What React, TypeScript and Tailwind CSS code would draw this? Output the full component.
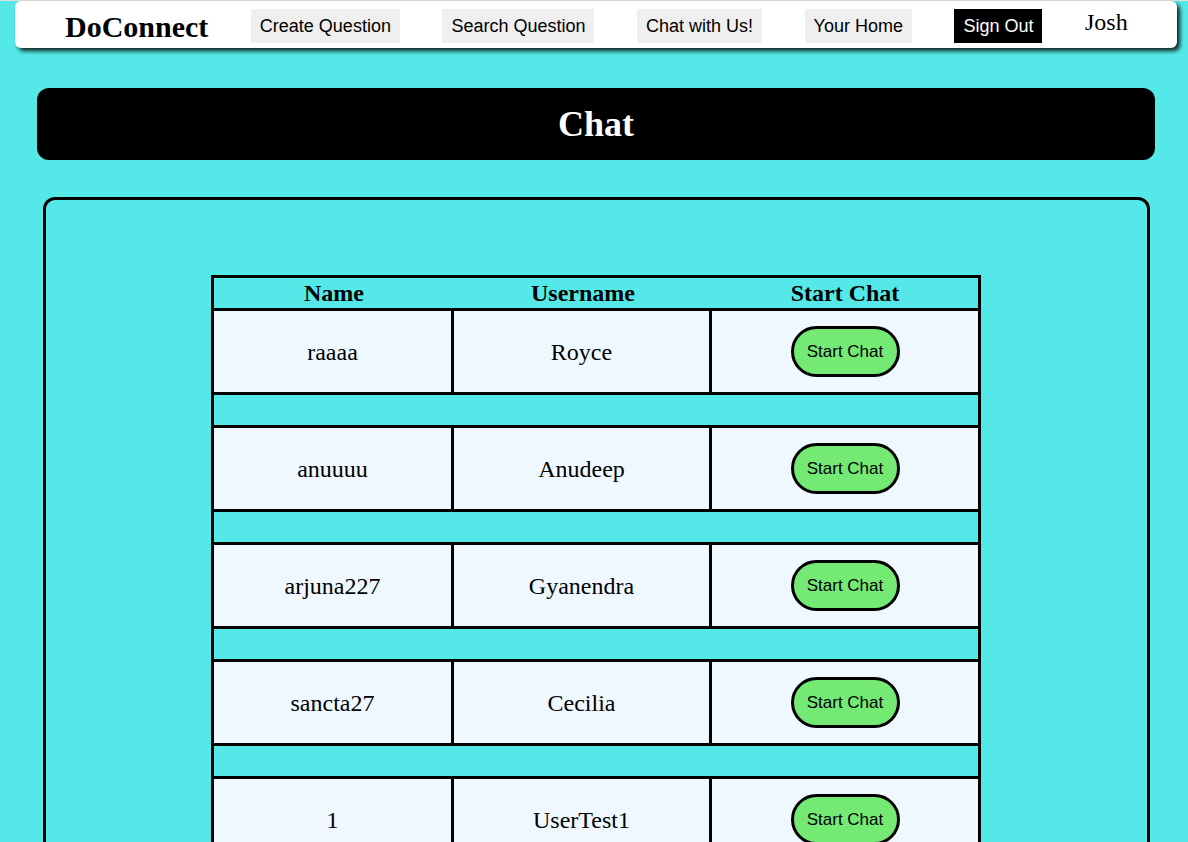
const users = [
  { name: "raaaa", username: "Royce" },
  { name: "anuuuu", username: "Anudeep" },
  { name: "arjuna227", username: "Gyanendra" },
  { name: "sancta27", username: "Cecilia" },
  { name: "1", username: "UserTest1" },
]

const serif = "font-['Liberation_Serif','Times_New_Roman',serif]"
const sans = "font-['Liberation_Sans',Arial,sans-serif]"

function NavButton({ label, dark }: { label: string; dark?: boolean }) {
  return (
    <button
      className={`h-[34px] px-[9px] text-[18px] leading-none ${sans} ${
        dark ? "bg-black text-white" : "bg-[#efefef] text-black"
      }`}
    >
      {label}
    </button>
  )
}

function Navbar() {
  return (
    <nav className="ml-[15px] mr-[11px] flex h-[47px] items-center gap-[42.5px] rounded-[6px] bg-white pl-[50px] pt-[3px] shadow-[3px_3px_4px_rgba(0,0,0,0.85)]">
      <h1 className={`${serif} text-[30px] font-bold text-black`}>DoConnect</h1>
      <NavButton label="Create Question" />
      <NavButton label="Search Question" />
      <NavButton label="Chat with Us!" />
      <NavButton label="Your Home" />
      <NavButton label="Sign Out" dark />
      <span className={`${serif} -mt-[8px] text-[24px] text-black`}>Josh</span>
    </nav>
  )
}

function UserRow({ name, username }: { name: string; username: string }) {
  return (
    <>
      <div className={`flex h-[84px] border-b-[3px] border-black bg-[#f0f8ff] ${serif} text-[24px] text-black`}>
        <div className="flex w-[240px] items-center justify-center border-r-[3px] border-black">{name}</div>
        <div className="flex w-[258px] items-center justify-center border-r-[3px] border-black">{username}</div>
        <div className="flex flex-1 items-center justify-center">
          <button
            className={`h-[51px] w-[109px] rounded-full border-[3px] border-black bg-[#74e974] text-[17px] text-black ${sans}`}
          >
            Start Chat
          </button>
        </div>
      </div>
      <div className="h-[33px] border-b-[3px] border-black bg-[#54e9e8]" />
    </>
  )
}

export default function App() {
  return (
    <div className="min-h-screen bg-[#54e9e8]">
      <div className="h-px bg-[#dedede]" />
      <Navbar />

      <section className="ml-[37px] mr-[33px] mt-[40px] flex h-[72px] items-center justify-center rounded-[12px] bg-black">
        <h2 className={`${serif} text-[36px] font-bold text-white`}>Chat</h2>
      </section>

      <section className="ml-[43px] mr-[38px] mt-[37px] rounded-[12px] border-[3px] border-black pb-10 pt-[75px]">
        <div className="ml-[165px] w-[770px] border-x-[3px] border-t-[3px] border-black">
          <div className={`flex h-[33px] border-b-[3px] border-black ${serif} text-[24px] font-bold text-black`}>
            <div className="flex w-[240px] items-center justify-center">Name</div>
            <div className="flex w-[258px] items-center justify-center">Username</div>
            <div className="flex flex-1 items-center justify-center">Start Chat</div>
          </div>
          {users.map((u) => (
            <UserRow key={u.name} name={u.name} username={u.username} />
          ))}
        </div>
      </section>
    </div>
  )
}
